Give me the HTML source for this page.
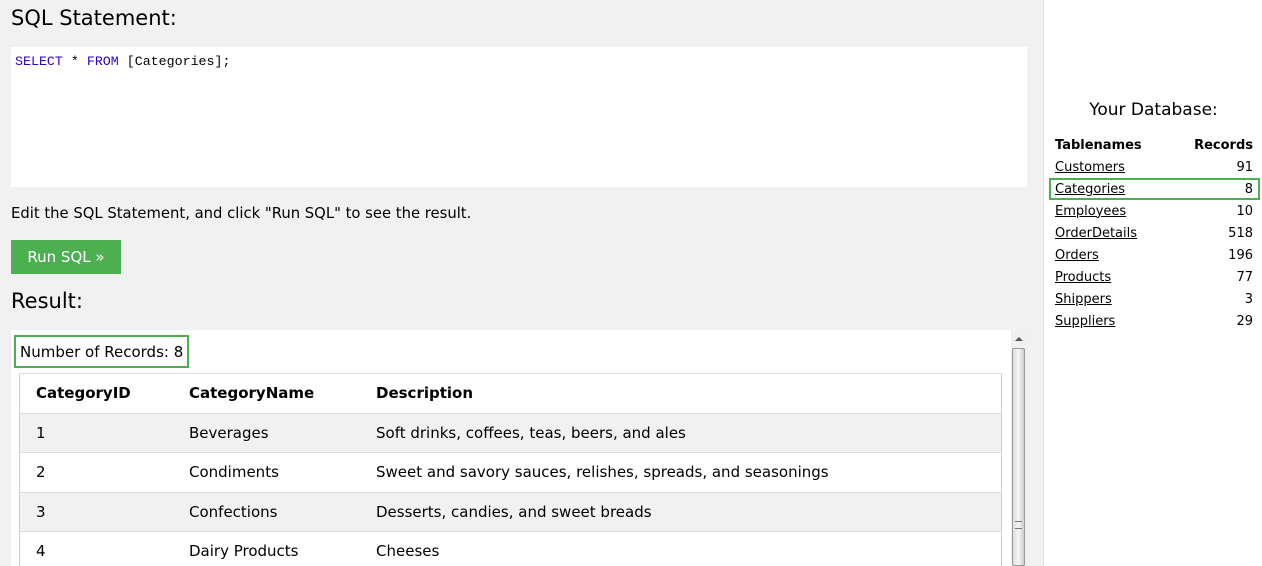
<!DOCTYPE html>
<html><head><style>
html,body{margin:0;width:1262px;height:566px;overflow:hidden}
body{background:#f1f1f1;font-family:Verdana,"DejaVu Sans",sans-serif;position:relative}
.t{position:absolute;left:11px;font-size:21px;color:#000;font-family:"Segoe UI","DejaVu Sans",sans-serif}
#code{position:absolute;left:11px;top:47px;width:1016px;height:140px;background:#fff;font-family:"Liberation Mono",monospace;font-size:13.3px}
#code span{position:absolute;left:4px;top:7px}
.kw{color:#2a00d4}
#edit{position:absolute;left:11px;top:205px;font-size:14.8px}
#btn{position:absolute;left:11px;top:240px;width:110px;height:34px;background:#4caf50;color:#fff;font-size:15px;line-height:34px;text-align:center}
#res{position:absolute;left:11px;top:330px;width:1000px;height:236px;background:#fff;overflow:hidden}
#num{position:absolute;left:3px;top:5px;border:2px solid #4caf50;padding:0 4px;height:29px;line-height:30px;font-size:15px}
table.r{position:absolute;left:8px;top:43px;width:983px;border-collapse:collapse;font-size:15px}
table.r td,table.r th{border-top:1px solid #ddd;height:38.5px;padding:0 0 0 16px;text-align:left}
table.r{border:1px solid #ccc}
table.r tr:nth-child(even){background:#f1f1f1}
#sb{position:absolute;left:1011px;top:330px;width:16px;height:236px;background:#f0f0f0}
#thumb{position:absolute;left:1012px;top:348px;width:13px;height:218px;background:linear-gradient(90deg,#ddd,#f6f6f6,#ccc);border:1px solid #999;box-sizing:border-box;border-radius:2px}
#right{position:absolute;left:1043px;top:0;width:219px;height:566px;background:#fff;border-left:1px solid #e4e4e4}
#yd{position:absolute;left:0;width:219px;top:100px;text-align:center;font-size:17px;font-family:"Segoe UI","DejaVu Sans",sans-serif}
table.d{position:absolute;left:9px;top:134px;width:202px;border-collapse:collapse;font-size:13px}
table.d td,table.d th{height:22px;padding:0 2px}
table.d td:last-child,table.d th:last-child{text-align:right}
table.d th{text-align:left}
table.d a{color:#000;text-decoration:underline}
#hl{position:absolute;left:1049px;top:178px;width:211px;height:22px;border:2px solid #4caf50;box-sizing:border-box}
</style></head><body>
<div class="t" style="top:6px">SQL Statement:</div>
<div id="code"><span><span class="kw" style="position:static">SELECT</span> * <span class="kw" style="position:static">FROM</span> [Categories];</span></div>
<div id="edit">Edit the SQL Statement, and click "Run SQL" to see the result.</div>
<div id="btn">Run SQL »</div>
<div class="t" style="top:289px">Result:</div>
<div id="res">
<div id="num">Number of Records: 8</div>
<table class="r">
<tr><th style="width:137px">CategoryID</th><th style="width:171px">CategoryName</th><th>Description</th></tr>
<tr><td>1</td><td>Beverages</td><td>Soft drinks, coffees, teas, beers, and ales</td></tr>
<tr><td>2</td><td>Condiments</td><td>Sweet and savory sauces, relishes, spreads, and seasonings</td></tr>
<tr><td>3</td><td>Confections</td><td>Desserts, candies, and sweet breads</td></tr>
<tr><td>4</td><td>Dairy Products</td><td>Cheeses</td></tr>
</table>
</div>
<div id="sb"><div style="position:absolute;left:4px;top:7px;width:0;height:0;border-left:4px solid transparent;border-right:4px solid transparent;border-bottom:4px solid #555"></div></div>
<div id="thumb"><div style="position:absolute;left:2px;top:172px;width:7px;height:8px;border-top:1px solid #777;border-bottom:1px solid #777;box-sizing:border-box"></div></div>
<div id="right">
<div id="yd">Your Database:</div>
<table class="d">
<tr><th>Tablenames</th><th>Records</th></tr>
<tr><td><a>Customers</a></td><td>91</td></tr>
<tr><td><a>Categories</a></td><td>8</td></tr>
<tr><td><a>Employees</a></td><td>10</td></tr>
<tr><td><a>OrderDetails</a></td><td>518</td></tr>
<tr><td><a>Orders</a></td><td>196</td></tr>
<tr><td><a>Products</a></td><td>77</td></tr>
<tr><td><a>Shippers</a></td><td>3</td></tr>
<tr><td><a>Suppliers</a></td><td>29</td></tr>
</table>
</div>
<div id="hl"></div>
</body></html>
